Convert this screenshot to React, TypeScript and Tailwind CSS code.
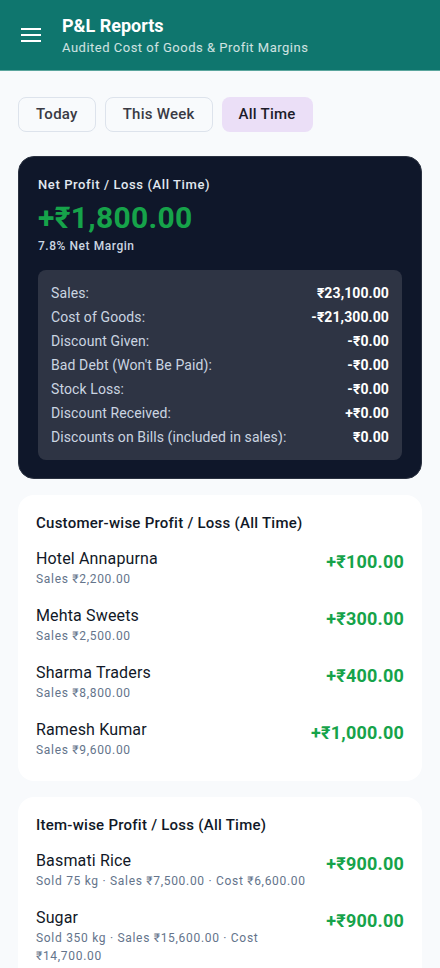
import { useState } from "react";

const breakdown = [
  { label: "Sales:", value: "₹23,100.00" },
  { label: "Cost of Goods:", value: "-₹21,300.00" },
  { label: "Discount Given:", value: "-₹0.00" },
  { label: "Bad Debt (Won't Be Paid):", value: "-₹0.00" },
  { label: "Stock Loss:", value: "-₹0.00" },
  { label: "Discount Received:", value: "+₹0.00" },
  { label: "Discounts on Bills (included in sales):", value: "₹0.00" },
];

const customers = [
  { name: "Hotel Annapurna", sub: "Sales ₹2,200.00", profit: "+₹100.00" },
  { name: "Mehta Sweets", sub: "Sales ₹2,500.00", profit: "+₹300.00" },
  { name: "Sharma Traders", sub: "Sales ₹8,800.00", profit: "+₹400.00" },
  { name: "Ramesh Kumar", sub: "Sales ₹9,600.00", profit: "+₹1,000.00" },
];

const items = [
  { name: "Basmati Rice", sub: "Sold 75 kg · Sales ₹7,500.00 · Cost ₹6,600.00", profit: "+₹900.00" },
  { name: "Sugar", sub: "Sold 350 kg · Sales ₹15,600.00 · Cost ₹14,700.00", profit: "+₹900.00" },
];

const tabs = ["Today", "This Week", "All Time"];

function Row({ name, sub, profit }: { name: string; sub: string; profit: string }) {
  return (
    <div className="flex items-start gap-3">
      <div className="min-w-0 flex-1">
        <div className="text-[16px] leading-[22px] text-[#111827] tracking-[0.15px]">{name}</div>
        <div className="text-[12px] leading-[18px] text-[#64748b] tracking-[0.7px]">{sub}</div>
      </div>
      <div className="mt-[2px] text-[18px] leading-[24px] font-bold text-[#16a34a] tracking-[0.2px]">
        {profit}
      </div>
    </div>
  );
}

function ListCard({ title, rows }: { title: string; rows: { name: string; sub: string; profit: string }[] }) {
  return (
    <div className="rounded-2xl bg-white px-[18px] pt-[18px] pb-[22px]">
      <h2 className="text-[15px] leading-[20px] font-medium text-[#111827] tracking-[0.25px]">{title}</h2>
      <div className="mt-[15px] flex flex-col gap-[17px]">
        {rows.map((r) => (
          <Row key={r.name} {...r} />
        ))}
      </div>
    </div>
  );
}

export default function App() {
  const [tab, setTab] = useState("All Time");

  return (
    <div className="min-h-screen bg-[#f8fafc]" style={{ fontFamily: "Roboto, 'Noto Sans', sans-serif" }}>
      <header className="flex h-[71px] items-center gap-[21px] border-b border-[#5aa59d] bg-[#0f766e] px-[21px]">
        <svg width="20" height="14" viewBox="0 0 20 14" className="shrink-0">
          <rect x="0" y="0" width="20" height="2" fill="white" />
          <rect x="0" y="6" width="20" height="2" fill="white" />
          <rect x="0" y="12" width="20" height="2" fill="white" />
        </svg>
        <div>
          <div className="text-[18px] leading-[24px] font-bold text-white">P&amp;L Reports</div>
          <div className="mt-[1px] text-[13px] leading-[18px] text-white/80 tracking-[0.5px]">
            Audited Cost of Goods &amp; Profit Margins
          </div>
        </div>
      </header>

      <main className="flex flex-col px-[18px] pt-[26px]">
        <div className="flex gap-[9px]">
          {tabs.map((t) => (
            <button
              key={t}
              onClick={() => setTab(t)}
              className={`h-[35px] rounded-lg px-[17px] text-[15px] font-medium tracking-[0.25px] ${
                tab === t
                  ? "bg-[#ebdff7] text-[#1c1b29]"
                  : "border border-[#dde3ec] bg-[#f8fafc] text-[#3a3a44]"
              }`}
            >
              {t}
            </button>
          ))}
        </div>

        <section className="mt-[24px] rounded-2xl border border-[#2a3140] bg-[#0f172a] px-[19px] pt-[19px] pb-[18px]">
          <div className="text-[13px] leading-[18px] font-medium text-[#e2e8f0] tracking-[0.6px]">
            Net Profit / Loss (All Time)
          </div>
          <div className="mt-[6px] text-[30px] leading-[36px] font-bold text-[#16a34a] tracking-[0.3px]">
            +₹1,800.00
          </div>
          <div className="mt-[2px] text-[12px] leading-[16px] font-medium text-[#cbd5e1] tracking-[0.55px]">
            7.8% Net Margin
          </div>
          <div className="mt-[16px] rounded-lg bg-[#2e3444] px-[13px] py-[11px]">
            {breakdown.map((b) => (
              <div key={b.label} className="flex h-[24px] items-center justify-between text-[14px]">
                <span className="text-[#cbd5e1] tracking-[0.1px]">{b.label}</span>
                <span className="font-bold text-white tracking-[0.1px]">{b.value}</span>
              </div>
            ))}
          </div>
        </section>

        <div className="mt-[16px]">
          <ListCard title="Customer-wise Profit / Loss (All Time)" rows={customers} />
        </div>
        <div className="mt-[16px]">
          <ListCard title="Item-wise Profit / Loss (All Time)" rows={items} />
        </div>
      </main>
    </div>
  );
}
